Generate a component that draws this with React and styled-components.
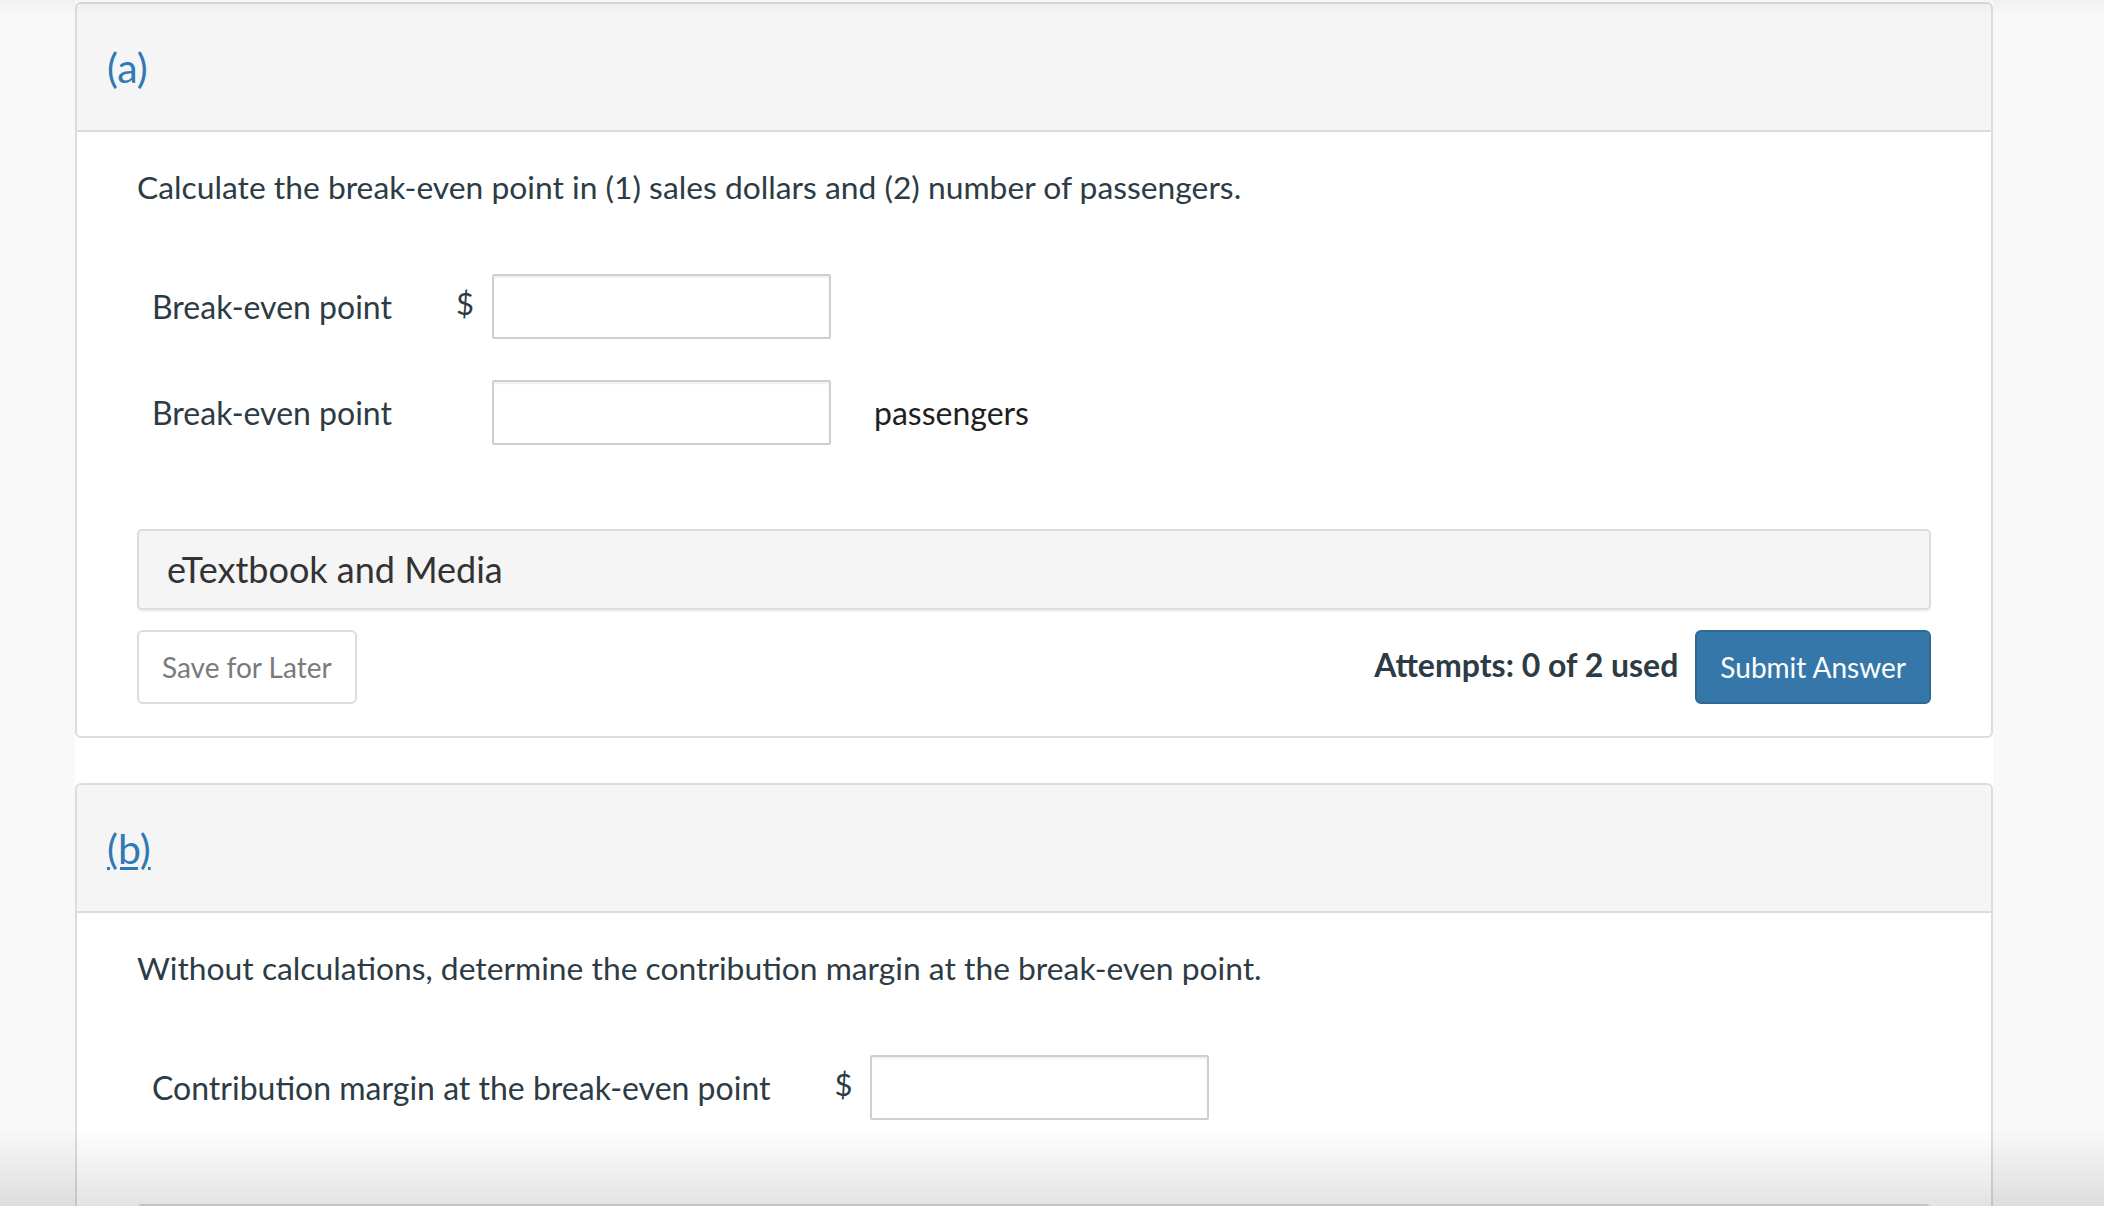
import React from "react";
import styled, { createGlobalStyle } from "styled-components";

const GlobalStyle = createGlobalStyle`
  html, body { margin: 0; padding: 0; }
  body {
    background: #f9f9f9;
    font-family: Lato, "Noto Sans", sans-serif;
    color: #2d3b45;
  }
  * { box-sizing: border-box; }
`;

const Page = styled.div`
  height: 100vh;
  overflow: hidden;
  padding-left: 75px;
`;

const Column = styled.main`
  width: 1918px;
  min-height: 100%;
  background: #fff;
  padding-top: 2px;
  display: flex;
  flex-direction: column;
  gap: 45px;
`;

const Card = styled.section`
  border: 2px solid #dcdcdc;
  border-radius: 6px;
  background: #fff;
  overflow: hidden;
  flex-shrink: 0;
`;

const CardHeader = styled.header`
  height: 128px;
  background: #f5f5f5;
  border-bottom: 2px solid #dcdcdc;
  display: flex;
  align-items: center;
  padding: 0 30px;
`;

const PartLabel = styled.a`
  font-size: 41px;
  color: #3179b4;
  text-decoration: ${(p) => (p.$underline ? "underline" : "none")};
  text-decoration-thickness: 3px;
  text-underline-offset: 3px;
  cursor: pointer;
`;

const CardBody = styled.div`
  padding: 33px 60px 32px;
`;

const Prompt = styled.p`
  margin: 0;
  font-size: 31.8px;
  line-height: 45px;
  color: #2d3b45;
`;

const FieldGrid = styled.div`
  margin-top: 43px;
  display: grid;
  grid-template-columns: auto 36px 339px auto;
  grid-auto-rows: 106px;
  align-items: center;
  justify-content: start;
`;

const FieldLabel = styled.label`
  padding: 0 64px 0 15px;
  font-size: 32px;
  color: #2d3b45;
`;

const Currency = styled.span`
  font-size: 31px;
  color: #2d3b45;
  margin-top: -6px;
`;

const AnswerInput = styled.input`
  width: 339px;
  height: 65px;
  border: 2px solid #cfcfcf;
  border-radius: 2px;
  box-shadow: inset 0 2px 2px rgba(0, 0, 0, 0.06);
  background: #fff;
  font: inherit;
  font-size: 28px;
  padding: 0 14px;
  outline: none;
`;

const Unit = styled.span`
  margin-left: 43px;
  font-size: 32px;
  color: #1f1f1f;
`;

const MediaBar = styled.div`
  margin-top: 64px;
  height: 81px;
  background: #f5f5f5;
  border: 2px solid #dcdcdc;
  border-radius: 5px;
  box-shadow: 0 2px 2px rgba(0, 0, 0, 0.06);
  display: flex;
  align-items: center;
  padding: 0 28px 2px;
  font-size: 36px;
  color: #333;
`;

const Actions = styled.div`
  margin-top: 20px;
  display: flex;
  align-items: center;
`;

const Button = styled.button`
  height: 74px;
  border-radius: 6px;
  font-family: inherit;
  font-size: 28px;
  padding: 0 23px;
  cursor: pointer;
  border: 2px solid ${(p) => (p.$primary ? "#2e6894" : "#dcdcdc")};
  background: ${(p) => (p.$primary ? "#3677aa" : "#fff")};
  color: ${(p) => (p.$primary ? "#fff" : "#7a7a7a")};
`;

const Spacer = styled.div`
  flex: 1;
`;

const Attempts = styled.span`
  font-size: 32px;
  font-weight: 700;
  color: #2d3b45;
  margin-right: 17px;
  margin-top: -6px;
`;

const TopShade = styled.div`
  position: fixed;
  top: 0;
  left: 0;
  right: 0;
  height: 14px;
  pointer-events: none;
  background: linear-gradient(rgba(0, 0, 0, 0.035), rgba(0, 0, 0, 0));
`;

const BottomShade = styled.div`
  position: fixed;
  bottom: 0;
  left: 0;
  right: 0;
  height: 78px;
  pointer-events: none;
  background: linear-gradient(rgba(0, 0, 0, 0), rgba(0, 0, 0, 0.11));
`;

function Part({ label, underline, prompt, fields, showActions }) {
  return (
    <Card>
      <CardHeader>
        <PartLabel $underline={underline}>{label}</PartLabel>
      </CardHeader>
      <CardBody>
        <Prompt>{prompt}</Prompt>
        <FieldGrid>
          {fields.map((f, i) => (
            <React.Fragment key={i}>
              <FieldLabel>{f.label}</FieldLabel>
              <Currency>{f.currency ? "$" : ""}</Currency>
              <AnswerInput type="text" aria-label={f.label} />
              <Unit>{f.unit || ""}</Unit>
            </React.Fragment>
          ))}
        </FieldGrid>
        <MediaBar>{showActions ? "eTextbook and Media" : ""}</MediaBar>
        {showActions && (
          <Actions>
            <Button>Save for Later</Button>
            <Spacer />
            <Attempts>Attempts: 0 of 2 used</Attempts>
            <Button $primary>Submit Answer</Button>
          </Actions>
        )}
      </CardBody>
    </Card>
  );
}

export default function App() {
  return (
    <>
      <GlobalStyle />
      <Page>
        <Column>
          <Part
            label="(a)"
            showActions
            prompt="Calculate the break-even point in (1) sales dollars and (2) number of passengers."
            fields={[
              { label: "Break-even point", currency: true },
              { label: "Break-even point", unit: "passengers" },
            ]}
          />
          <Part
            label="(b)"
            underline
            prompt="Without calculations, determine the contribution margin at the break-even point."
            fields={[
              { label: "Contribution margin at the break-even point", currency: true },
            ]}
          />
        </Column>
      </Page>
      <TopShade />
      <BottomShade />
    </>
  );
}
